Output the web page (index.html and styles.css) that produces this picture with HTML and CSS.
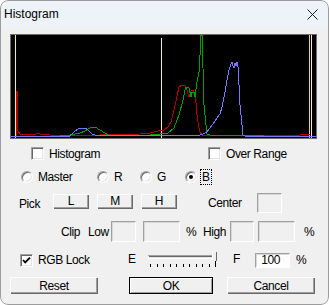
FILE: index.html
```html
<!DOCTYPE html>
<html lang="en">
<head>
  <meta charset="UTF-8">
  <title>Histogram</title>
  <link rel="stylesheet" href="styles.css">
</head>
<body>
  <div class="window">
    <div class="titlebar">
      <span class="title">Histogram</span>
      <svg class="close" width="11" height="11" viewBox="0 0 11 11">
        <path d="M0.5 0.5 L10.5 10.5 M10.5 0.5 L0.5 10.5" stroke="#1b1b1b" stroke-width="1" fill="none"/>
      </svg>
    </div>

    <div class="graph">
      <svg width="305" height="103" viewBox="11 35 305 103" shape-rendering="crispEdges">
        <rect x="11" y="35" width="305" height="103" fill="#000"/>
        <!-- markers -->
        <line x1="15.5" y1="35" x2="15.5" y2="138" stroke="#ffff00"/>
        <line x1="161.5" y1="38" x2="161.5" y2="138" stroke="#f4f0a0"/>
        <line x1="309.5" y1="35" x2="309.5" y2="138" stroke="#e8dc20"/>
        <line x1="311.5" y1="35" x2="311.5" y2="138" stroke="#f4f0a0"/>
        <!-- channels -->
        <polyline fill="none" stroke="#b40000" points="16,136 16,91 17,91 17,123 18,131 20,134 36,134 38,133 40,134 48,134 50,135 100,135 140,134 150,133 158,131 164,130 168,127 171,122 174,110 177,96 179,87 182,85 185,86 187,90 189,97 191,91 193,90 195,95 196,103 197,115 199,128 200,132 202,135 230,135 300,135 310,134"/>
        <polyline fill="none" stroke="#00a000" points="16,136 60,136 70,135 80,133 85,131 90,128 95,127 100,130 105,133 108,135 150,135 160,134 168,133 174,128 179,115 183,100 185,90 187,87 189,88 191,97 192,92 194,92 195,97 197,82 199,72 200,55 201,35 202,35 203,68 204,105 206,125 207,134 210,135 264,135"/>
        <polyline fill="none" stroke="#7878ff" points="11,136 70,136 72,134 75,131 78,129 80,128 85,128 88,130 92,134 95,135 200,135 203,134 207,132 210,128 213,124 217,118 220,114 222,107 225,92 227,80 229,70 231,64 232,62 233,66 234,68 235,63 236,66 237,62 238,67 239,85 240,105 242,125 243,135 245,136 316,136"/>
      </svg>
    </div>

    <div class="row row-checks">
      <label class="check cell-hist"><span class="box"></span>Histogram</label>
      <label class="check"><span class="box"></span>Over Range</label>
    </div>

    <div class="row row-radios">
      <label class="radio-item cell-master"><span class="radio"></span>Master</label>
      <label class="radio-item cell-r"><span class="radio"></span>R</label>
      <label class="radio-item cell-g"><span class="radio"></span>G</label>
      <label class="radio-item cell-b"><span class="radio on"></span><span class="focus">B</span></label>
    </div>

    <div class="row row-pick">
      <span class="lbl lbl-pick">Pick</span>
      <button class="btn btn-pick">L</button>
      <button class="btn btn-pick">M</button>
      <button class="btn btn-pick">H</button>
      <span class="lbl lbl-center">Center</span>
      <span class="field field-center"></span>
    </div>

    <div class="row row-clip">
      <span class="lbl lbl-clip">Clip</span>
      <span class="lbl lbl-low">Low</span>
      <span class="field field-s"></span>
      <span class="field field-l gap-low"></span>
      <span class="lbl lbl-pct1">%</span>
      <span class="lbl lbl-high">High</span>
      <span class="field field-s w24"></span>
      <span class="field field-l gap-high"></span>
      <span class="lbl lbl-pct2">%</span>
    </div>

    <div class="row row-lock">
      <label class="check cell-lock">
        <span class="box">
          <svg width="11" height="11" viewBox="0 0 11 11"><path d="M2 5 L4.2 7.4 L9 2.6" stroke="#000" stroke-width="1.8" fill="none"/></svg>
        </span>RGB Lock
      </label>
      <span class="lbl lbl-e">E</span>
      <svg class="slider" width="74" height="16" viewBox="146 252 74 16" shape-rendering="crispEdges">
        <line x1="148" y1="255.5" x2="216" y2="255.5" stroke="#a0a0a0"/>
        <line x1="149" y1="256.5" x2="215" y2="256.5" stroke="#696969"/>
        <line x1="149" y1="257.5" x2="215" y2="257.5" stroke="#e3e3e3"/>
        <line x1="148" y1="258.5" x2="216" y2="258.5" stroke="#ffffff"/>
        <polygon points="212,252 217,252 217,260 214.5,263 212,260" fill="#f0f0f0" shape-rendering="auto"/>
        <line x1="212.5" y1="252" x2="212.5" y2="260" stroke="#ffffff"/>
        <line x1="216.5" y1="252" x2="216.5" y2="261" stroke="#696969"/>
        <g stroke="#000">
          <line x1="150.5" y1="264" x2="150.5" y2="267"/>
          <line x1="157.5" y1="264" x2="157.5" y2="267"/>
          <line x1="163.5" y1="264" x2="163.5" y2="267"/>
          <line x1="170.5" y1="264" x2="170.5" y2="267"/>
          <line x1="176.5" y1="264" x2="176.5" y2="267"/>
          <line x1="183.5" y1="264" x2="183.5" y2="267"/>
          <line x1="189.5" y1="264" x2="189.5" y2="267"/>
          <line x1="196.5" y1="264" x2="196.5" y2="267"/>
          <line x1="202.5" y1="264" x2="202.5" y2="267"/>
          <line x1="209.5" y1="264" x2="209.5" y2="267"/>
          <line x1="215.5" y1="261" x2="215.5" y2="267"/>
        </g>
      </svg>
      <span class="lbl lbl-f">F</span>
      <span class="field field-white">100</span>
      <span class="lbl lbl-pct3">%</span>
    </div>

    <div class="row row-buttons">
      <button class="btn btn-wide btn-reset">Reset</button>
      <button class="btn btn-ok">OK</button>
      <button class="btn btn-wide btn-cancel">Cancel</button>
    </div>
  </div>
</body>
</html>
```

FILE: styles.css
```css
body {
  margin: 0;
  background: #ffffff;
  font-family: "Liberation Sans", Arial, sans-serif;
}

.window {
  position: relative;
  width: 329px;
  height: 305px;
  border-radius: 8px;
  overflow: hidden;
  background: #f0f0f0;
  font-size: 12px;
  letter-spacing: -0.4px;
  color: #000;
}

/* thin window frame drawn over the edges */
.window::after {
  content: "";
  position: absolute;
  top: 0;
  left: 0;
  right: 0;
  bottom: 0;
  border: 1px solid #9c9c9c;
  border-radius: 8px;
  pointer-events: none;
}

.titlebar {
  height: 28px;
  background: #eef3f9;
  display: flex;
  align-items: center;
  justify-content: space-between;
  padding: 0 11px 0 4px;
}

.title {
  font-size: 12px;
  letter-spacing: 0;
  line-height: 14px;
}

.close {
  display: block;
}

.graph {
  margin: 6px 0 0 10px;
  width: 305px;
  height: 103px;
  border: 1px solid #6e6e6e;
}

.graph svg {
  display: block;
}

.row {
  display: flex;
  align-items: center;
}

.lbl {
  line-height: 14px;
  white-space: nowrap;
}

/* checkboxes */
.check {
  display: flex;
  align-items: center;
  gap: 5px;
  line-height: 14px;
}

.box {
  box-sizing: border-box;
  width: 13px;
  height: 13px;
  background: #fff;
  border: 1px solid;
  border-color: #a0a0a0 #ffffff #ffffff #a0a0a0;
  box-shadow: inset 1px 1px 0 #696969, inset -1px -1px 0 #e3e3e3;
  display: flex;
  align-items: center;
  justify-content: center;
}

.box svg {
  display: block;
  margin: 0 0 0 0;
}

.row-checks {
  margin-top: 8px;
  height: 13px;
  padding-left: 31px;
}

.cell-hist {
  width: 177px;
}

/* radio buttons */
.row-radios {
  margin-top: 11px;
  height: 12px;
  padding-left: 21px;
}

.radio-item {
  display: flex;
  align-items: center;
  gap: 5px;
  line-height: 14px;
}

.cell-master { width: 76px; }
.cell-r { width: 43px; }
.cell-g { width: 45px; }
.cell-b { gap: 3px; }

.radio {
  position: relative;
  box-sizing: border-box;
  width: 12px;
  height: 12px;
  border-radius: 50%;
  background: #fff;
  border: 1px solid;
  border-color: #a0a0a0 #ffffff #ffffff #a0a0a0;
  box-shadow: inset 1px 1px 0 #696969, inset -1px -1px 0 #e3e3e3;
}

.radio.on::after {
  content: "";
  position: absolute;
  left: 3px;
  top: 3px;
  width: 4px;
  height: 4px;
  border-radius: 50%;
  background: #000;
}

.focus {
  padding: 0 1px;
  line-height: 14px;
  border: 1px dotted #000;
}

/* classic buttons */
.btn {
  box-sizing: border-box;
  margin: 0;
  padding: 0;
  border: none;
  background: #f0f0f0;
  font-family: inherit;
  font-size: 12px;
  letter-spacing: -0.4px;
  color: #000;
  box-shadow: inset 1px 1px 0 #ffffff, inset -1px -1px 0 #696969, inset -2px -2px 0 #a0a0a0;
}

.row-pick {
  margin-top: 10px;
  height: 20px;
  padding-left: 19px;
}

.lbl-pick {
  width: 34px;
  margin-top: 1px;
}

.btn-pick {
  width: 36px;
  height: 15px;
  line-height: 13px;
  margin-right: 8px;
  align-self: flex-start;
  margin-top: 1px;
}

.lbl-center {
  margin-left: 23px;
  width: 49px;
}

.field {
  box-sizing: border-box;
  display: block;
  height: 21px;
  background: #f0f0f0;
  border: 1px solid;
  border-color: #a0a0a0 #ffffff #ffffff #a0a0a0;
  box-shadow: inset 1px 1px 0 #d8d8d8;
}

.field-center {
  width: 25px;
  height: 20px;
}

.row-clip {
  margin-top: 8px;
  height: 21px;
  padding-left: 61px;
}

.lbl-clip { width: 27px; }
.lbl-low { width: 23px; }
.field-s { width: 25px; }
.w24 { width: 24px; }
.field-l { width: 37px; }
.gap-low { margin-left: 7px; }
.gap-high { margin-left: 4px; }
.lbl-pct1 { margin-left: 6px; width: 17px; }
.lbl-high { width: 27px; }
.lbl-pct2 { margin-left: 9px; }

.row-lock {
  margin-top: 10px;
  height: 16px;
  padding-left: 20px;
}

.cell-lock {
  width: 108px;
}

.lbl-e {
  width: 18px;
  margin-top: -3px;
}

.slider {
  display: block;
}

.lbl-f {
  margin-left: 13px;
  width: 22px;
  margin-top: -3px;
}

.field-white {
  width: 35px;
  height: 15px;
  background: #fff;
  line-height: 13px;
  text-align: right;
  padding-right: 9px;
}

.lbl-pct3 {
  margin-left: 6px;
}

.row-buttons {
  margin-top: 9px;
  height: 17px;
  padding-left: 10px;
}

.btn-wide {
  width: 88px;
  height: 17px;
}

.btn-ok {
  width: 84px;
  height: 17px;
  margin-left: 31px;
  border: 1px solid #000;
  box-shadow: inset 1px 1px 0 #ffffff, inset -1px -1px 0 #a0a0a0;
}

.btn-cancel {
  margin-left: 14px;
}
```
